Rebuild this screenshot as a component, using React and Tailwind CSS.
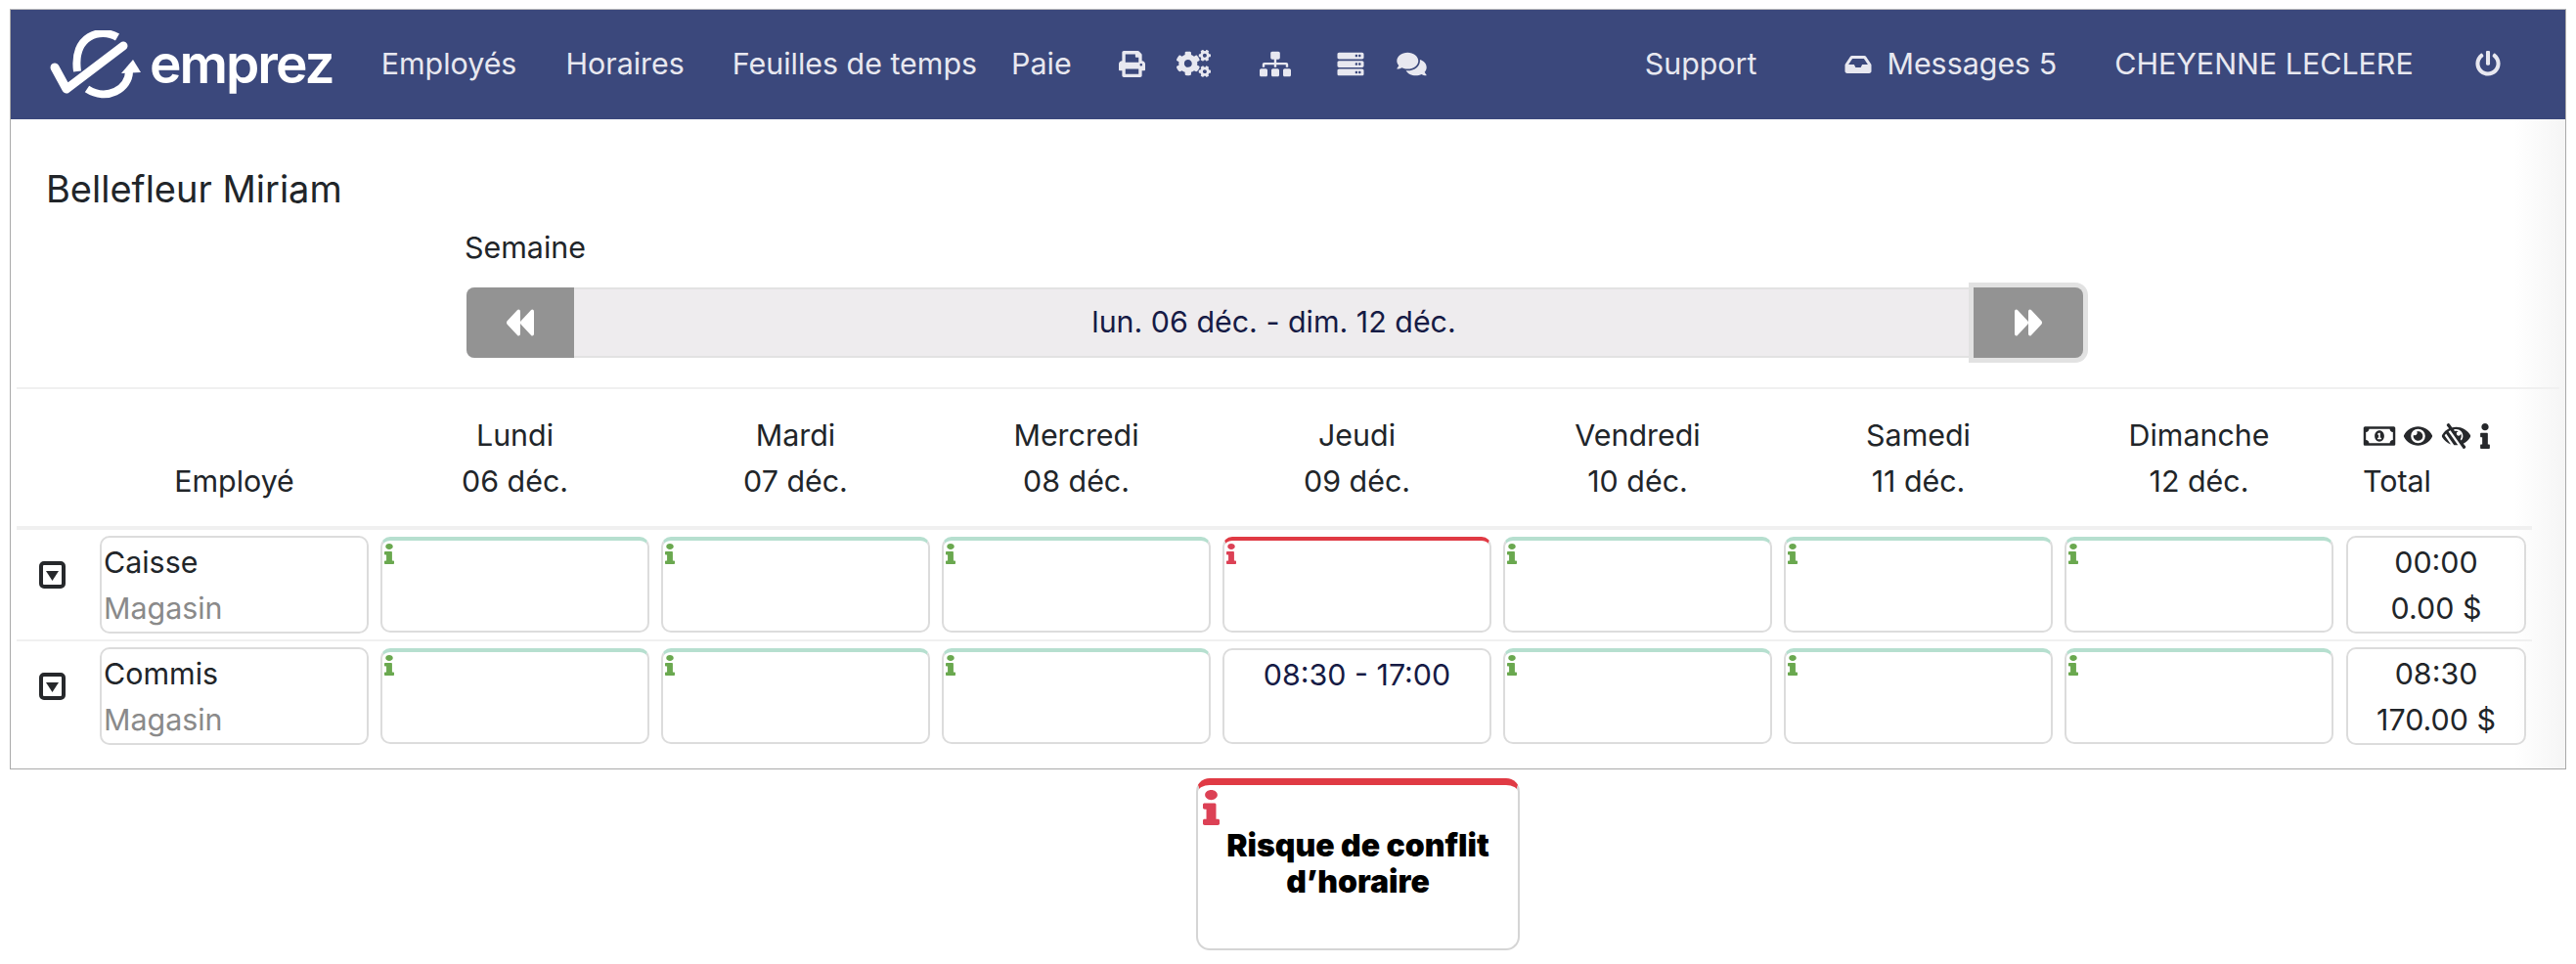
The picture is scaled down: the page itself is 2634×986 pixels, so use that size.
import {
  FaBackward,
  FaCogs,
  FaComments,
  FaEye,
  FaForward,
  FaInbox,
  FaInfo,
  FaLowVision,
  FaPowerOff,
  FaPrint,
  FaRegMoneyBillAlt,
  FaServer,
  FaSitemap,
} from 'react-icons/fa';

const days = [
  ['Lundi', '06 déc.'],
  ['Mardi', '07 déc.'],
  ['Mercredi', '08 déc.'],
  ['Jeudi', '09 déc.'],
  ['Vendredi', '10 déc.'],
  ['Samedi', '11 déc.'],
  ['Dimanche', '12 déc.'],
];

const rows = [
  { name: 'Caisse', hours: '00:00', pay: '0.00 $', alert: 3 },
  { name: 'Commis', hours: '08:30', pay: '170.00 $', shift: 3 },
];

function Logo() {
  return (
    <svg viewBox="0 0 100 70" className="h-[70px] w-[100px] shrink-0 text-white" fill="none" stroke="currentColor">
      <path d="M9 38 L21 60 L79 16" strokeWidth="9" strokeLinecap="round" strokeLinejoin="round" />
      <path d="M73 7 C56 -3 27 5 32 42" strokeWidth="8" />
      <path d="M85 42 C85 60 62 73 42 60" strokeWidth="8" />
      <path d="M77 44 L89 30 L97 43 Z" fill="currentColor" stroke="none" />
    </svg>
  );
}

function CaretBox() {
  return (
    <svg viewBox="0 0 27 28" className="w-[27px] h-[28px] text-[#26282b]">
      <rect x="2" y="2" width="23" height="24" rx="3" fill="none" stroke="currentColor" strokeWidth="4" />
      <path d="M7 10 H20 L13.5 20 Z" fill="currentColor" />
    </svg>
  );
}

function DayCell({ alert, shift }) {
  if (shift) {
    return (
      <div className="w-[275px] h-[98px] mt-px pt-[2px] rounded-[10px] border-2 border-[#dcdcdc] text-center text-[30.4px] leading-[47px] text-[#161b45]">
        {shift}
      </div>
    );
  }
  return (
    <div
      className={`w-[275px] h-[98px] mt-px rounded-[10px] border-2 border-t-4 border-[#dcdcdc] pl-[2px] pt-[3px] ${
        alert ? 'border-t-[#e03a44]' : 'border-t-[#b6dfcf]'
      }`}
    >
      <FaInfo
        preserveAspectRatio="none"
        className={`w-[10px] h-[21px] ${alert ? 'text-[#dc4155]' : 'text-[#6aa84f]'}`}
      />
    </div>
  );
}

function Row({ row, first }) {
  return (
    <div className={`flex gap-[12px] pb-[6px] pt-[6px] ${first ? 'border-t-4 border-[#f0f0f0]' : 'border-t-2 border-[#f0f0f0]'}`}>
      <div className="w-[73px] pl-[23px] pt-[26px]">
        <CaretBox />
      </div>
      <div className="w-[275px] h-[100px] pt-[2px] rounded-[10px] border-2 border-[#dcdcdc] pl-[2px] text-[30.4px] leading-[47px]">
        <div className="text-[#212529]">{row.name}</div>
        <div className="text-[#8a8a8a]">Magasin</div>
      </div>
      {days.map((d, i) => (
        <DayCell
          key={d[0]}
          alert={row.alert === i}
          shift={row.shift === i ? '08:30 - 17:00' : null}
        />
      ))}
      <div className="w-[184px] h-[100px] pt-[2px] ml-px rounded-[10px] border-2 border-[#dcdcdc] text-center text-[30.4px] leading-[47px] text-[#212529]">
        <div>{row.hours}</div>
        <div>{row.pay}</div>
      </div>
    </div>
  );
}

export default function App() {
  return (
    <div className="w-[2634px] h-[986px] bg-white pt-[9px] pl-[10px] font-['Inter','Liberation_Sans',sans-serif] text-[#212529]">
      <div className="w-[2614px] h-[778px] border border-[#aaaaaa] border-t-[#bbbbbb] bg-linear-to-r from-white from-[98%] to-[#f5f5f5]">
        <nav className="flex items-center h-[112px] bg-[#3b487c] pl-[36px] text-[30.4px] text-[#e8e8f0]">
          <Logo />
          <span className="ml-[6px] text-[55px] leading-none font-semibold tracking-[-2px] text-white -mt-[2px]">emprez</span>
          <span className="ml-[49px]">Employés</span>
          <span className="ml-[50px]">Horaires</span>
          <span className="ml-[49px]">Feuilles de temps</span>
          <span className="ml-[35px]">Paie</span>
          <FaPrint className="ml-[47px] w-[29px] h-[27px] -mt-[2px]" />
          <FaCogs className="ml-[31px] w-[35px] h-[28px] -mt-[2px]" />
          <FaSitemap className="ml-[50px] w-[32px] h-[27px] -mt-[2px]" />
          <FaServer className="ml-[45px] w-[32px] h-[27px] -mt-[2px]" />
          <FaComments className="ml-[30px] w-[33px] h-[27px] -mt-[2px]" />
          <span className="ml-[222px]">Support</span>
          <FaInbox className="ml-[90px] w-[28px] h-[24px]" />
          <span className="ml-[15px]">Messages 5</span>
          <span className="ml-[59px]">CHEYENNE LECLERE</span>
          <FaPowerOff className="ml-[63px] w-[26px] h-[28px] -mt-[2px]" />
        </nav>

        <div className="pl-[36px] pt-[46px] text-[38px] leading-[50px]">Bellefleur Miriam</div>
        <div className="pl-[464px] pt-[15px] text-[30.4px] leading-[40px]">Semaine</div>

        <div className="ml-[466px] mt-[21px] w-[1653px] h-[72px] flex rounded-[8px] bg-[#eeecee] border-y-2 border-[#e2e2e2]">
          <div className="w-[110px] -my-[2px] rounded-l-[8px] bg-[#939393] flex items-center justify-center">
            <FaBackward preserveAspectRatio="none" className="w-[28px] h-[36px] text-white" />
          </div>
          <div className="flex-1 flex items-center justify-center text-[30.4px] text-[#161b45]">
            lun. 06 déc. - dim. 12 déc.
          </div>
          <div className="w-[112px] -my-[2px] rounded-r-[8px] bg-[#939393] flex items-center justify-center shadow-[0_0_0_5px_#e2e2e2]">
            <FaForward preserveAspectRatio="none" className="w-[28px] h-[36px] text-white" />
          </div>
        </div>

        <div className="mx-[6px] mt-[30px] border-t-2 border-[#f0f0f0]">
          <div className="flex gap-[12px] h-[140px] items-end pb-[22px] text-[30.4px] leading-[47px] text-center">
            <div className="w-[73px]" />
            <div className="w-[275px]">Employé</div>
            {days.map((d) => (
              <div key={d[0]} className="w-[275px]">
                <div>{d[0]}</div>
                <div>{d[1]}</div>
              </div>
            ))}
            <div className="w-[184px] ml-px pl-[17px] text-left">
              <div className="flex items-center gap-[7px] h-[47px] text-[#26282b]">
                <FaRegMoneyBillAlt className="w-[34px] h-[26px]" />
                <FaEye className="w-[31px] h-[26px]" />
                <FaLowVision className="w-[33px] h-[26px]" />
                <FaInfo className="w-[12px] h-[26px]" />
              </div>
              <div>Total</div>
            </div>
          </div>
          <div className="w-[2572px]">
            {rows.map((row, i) => (
              <Row key={row.name} row={row} first={i === 0} />
            ))}
          </div>
        </div>
      </div>

      <div className="ml-[1213px] mt-[9px] w-[331px] h-[176px] rounded-[14px] border-2 border-t-[7px] border-[#d5d5d5] border-t-[#e03a44] bg-white">
        <FaInfo preserveAspectRatio="none" className="ml-[5px] mt-[5px] w-[17px] h-[36px] text-[#dc4155]" />
        <div className="mt-[2px] text-center text-[32px] leading-[37px] font-black text-black">
          Risque de conflit
          <br />
          d’horaire
        </div>
      </div>
    </div>
  );
}
